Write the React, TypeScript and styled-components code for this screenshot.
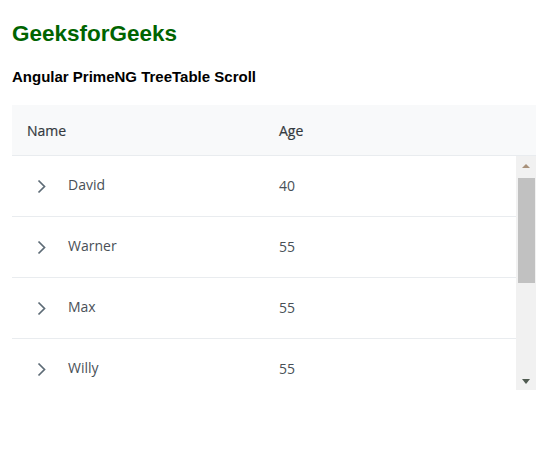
import React from 'react';
import styled, {createGlobalStyle} from 'styled-components';

type Node = {
  name: string;
  age: number;
};

const NODES: Node[] = [
  {name: 'David', age: 40},
  {name: 'Warner', age: 55},
  {name: 'Max', age: 55},
  {name: 'Willy', age: 55},
];

const GlobalStyle = createGlobalStyle`
  body {
    margin: 0;
    background: #ffffff;
    font-family: "Open Sans", "Noto Sans", sans-serif;
  }
`;

const Page = styled.div`
  padding: 21px 0 0 12px;
`;

const Title = styled.h1`
  margin: 0;
  font-family: "Liberation Sans", Arial, sans-serif;
  font-size: 22.5px;
  line-height: 26px;
  font-weight: 700;
  color: #006400;
`;

const Subtitle = styled.h3`
  margin: 21px 0 0;
  font-family: "Liberation Sans", Arial, sans-serif;
  font-size: 15px;
  line-height: 18px;
  font-weight: 700;
  color: #000000;
`;

const Table = styled.div`
  margin-top: 19px;
  width: 524px;
  font-size: 14px;
  color: #495057;
`;

const HeaderRow = styled.div`
  display: grid;
  grid-template-columns: 252px 252px 20px;
  height: 50px;
  background: #f8f9fa;
  border-bottom: 1px solid #e9ecef;
`;

const HeaderCell = styled.div`
  display: flex;
  align-items: center;
  padding: 1px 15px 0;
  font-weight: 500;
  color: #343a40;
  -webkit-text-stroke: 0.2px #343a40;
`;

const BodyWrap = styled.div`
  display: flex;
  height: 234px;
`;

const Viewport = styled.div`
  width: 504px;
  overflow: hidden;
`;

const Row = styled.div`
  display: grid;
  grid-template-columns: 252px 252px;
  height: 60px;
  border-bottom: 1px solid #e9ecef;
`;

const Cell = styled.div<{$num?: boolean}>`
  display: flex;
  align-items: center;
  padding: ${p => (p.$num ? '0 15px 1px' : '0 15px 3px')};
`;

const Toggler = styled.span`
  display: inline-flex;
  align-items: center;
  justify-content: center;
  width: 29px;
  height: 28px;
  margin: 4px 12px 0 0;
`;

const Scrollbar = styled.div`
  width: 20px;
  display: flex;
  flex-direction: column;
  background: #f1f1f1;
`;

const Arrow = styled.div<{$down?: boolean}>`
  height: 17px;
  display: flex;
  align-items: center;
  justify-content: center;
  padding-top: ${p => (p.$down ? '0' : '1px')};

  &::before {
    content: '';
    width: 0;
    height: 0;
    border-left: 4px solid transparent;
    border-right: 4px solid transparent;
    ${p =>
      p.$down
        ? 'border-top: 5px solid #505b51;'
        : 'border-bottom: 4px solid #a8917a;'}
  }
`;

const Track = styled.div`
  flex: 1;
  padding: 4px 1px 0 2px;
`;

const Thumb = styled.div`
  height: 105px;
  background: #c1c1c1;
`;

const Chevron = () => (
  <svg width="9" height="15" viewBox="0 0 9 15">
    <path d="M1.5 1.5 L7.5 7.5 L1.5 13.5" fill="none" stroke="#5d6b76" strokeWidth="1.7" />
  </svg>
);

function App() {
  return (
    <Page>
      <GlobalStyle />
      <Title>GeeksforGeeks</Title>
      <Subtitle>Angular PrimeNG TreeTable Scroll</Subtitle>
      <Table>
        <HeaderRow>
          <HeaderCell>Name</HeaderCell>
          <HeaderCell>Age</HeaderCell>
          <div />
        </HeaderRow>
        <BodyWrap>
          <Viewport>
            {NODES.map(node => (
              <Row key={node.name}>
                <Cell>
                  <Toggler>
                    <Chevron />
                  </Toggler>
                  {node.name}
                </Cell>
                <Cell $num>{node.age}</Cell>
              </Row>
            ))}
          </Viewport>
          <Scrollbar>
            <Arrow />
            <Track>
              <Thumb />
            </Track>
            <Arrow $down />
          </Scrollbar>
        </BodyWrap>
      </Table>
    </Page>
  );
}

export default App;
